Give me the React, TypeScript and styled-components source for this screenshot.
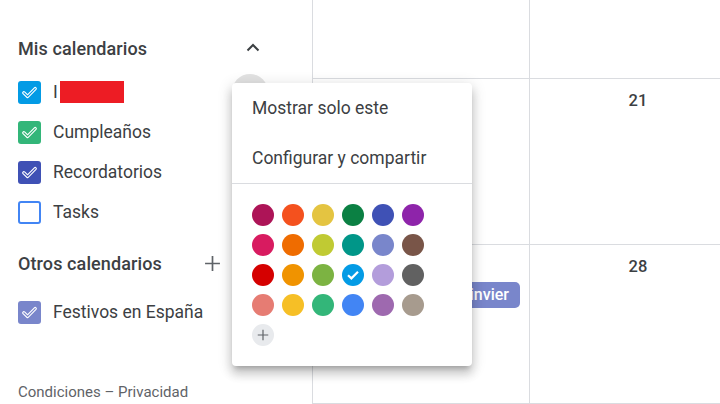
import React from "react"
import styled, { createGlobalStyle } from "styled-components"

const GlobalStyle = createGlobalStyle`
  html, body {
    margin: 0;
    padding: 0;
    background: #fff;
    font-family: Roboto, "Liberation Sans", Arial, sans-serif;
    color: #3c4043;
  }
  #root {
    width: 720px;
    height: 404px;
    overflow: hidden;
  }
`

const Screen = styled.div`
  position: relative;
  display: flex;
  width: 720px;
  height: 404px;
  overflow: hidden;
`

const Sidebar = styled.aside`
  width: 313px;
  flex-shrink: 0;
  border-right: 1px solid #dadce0;
  padding: 28px 41px 0 18px;
  box-sizing: border-box;
  display: flex;
  flex-direction: column;
`

const SectionHeader = styled.div<{ $top: number }>`
  display: flex;
  align-items: center;
  height: 40px;
  margin-top: ${(p) => p.$top}px;
  gap: 5px;
`

const SectionTitle = styled.h2`
  flex: 1;
  margin: 0;
  font-size: 18px;
  font-weight: 500;
  color: #3c4043;
  letter-spacing: 0.1px;
`

const IconSlot = styled.span`
  width: 36px;
  height: 36px;
  display: flex;
  align-items: center;
  justify-content: center;
  color: #3c4043;
`

const List = styled.ul<{ $top: number }>`
  list-style: none;
  margin: ${(p) => p.$top}px 0 0 0;
  padding: 0;
`

const Item = styled.li`
  display: flex;
  align-items: center;
  height: 40px;
`

const Label = styled.span`
  flex: 1;
  display: flex;
  align-items: center;
  margin-left: 12px;
  font-size: 17.5px;
  color: #3c4043;
  white-space: nowrap;
`

const Redacted = styled.span`
  display: inline-block;
  width: 64px;
  height: 22px;
  margin-left: 2px;
  background: #ed1c24;
`

const OptionsHover = styled.span`
  width: 36px;
  height: 36px;
  border-radius: 50%;
  background: #e2e2e2;
  margin-right: 3px;
`

const Box = styled.span<{ $color: string; $checked: boolean }>`
  width: 23px;
  height: 23px;
  box-sizing: border-box;
  border-radius: 3px;
  flex-shrink: 0;
  display: flex;
  align-items: center;
  justify-content: center;
  background: ${(p) => (p.$checked ? p.$color : "#fff")};
  border: ${(p) => (p.$checked ? "none" : `2.5px solid ${p.$color}`)};
`

const Footer = styled.div`
  margin-top: auto;
  margin-bottom: 1px;
  height: 20px;
  font-size: 15px;
  color: #5f6368;
  white-space: nowrap;
`

const Main = styled.main`
  flex: 1;
  display: grid;
  grid-template-columns: 217px 217px;
  grid-template-rows: 79px 166px 1fr;
`

const Cell = styled.div`
  border-right: 1px solid #dadce0;
  border-bottom: 1px solid #dadce0;
  padding-top: 10px;
  display: flex;
  flex-direction: column;
  align-items: stretch;
  min-width: 0;
`

const DayNum = styled.div`
  height: 24px;
  line-height: 24px;
  text-align: center;
  font-size: 16.5px;
  font-weight: 500;
  color: #3c4043;
`

const Chip = styled.div<{ $color: string }>`
  margin: 3px 9px 0 8px;
  height: 26px;
  border-radius: 5px;
  background: ${(p) => p.$color};
  color: #fff;
  font-size: 16px;
  font-weight: 500;
  line-height: 26px;
  padding: 0 11px 0 6px;
  white-space: nowrap;
  overflow: hidden;
  text-align: right;
`

const Menu = styled.div`
  position: absolute;
  left: 232px;
  top: 83px;
  width: 240px;
  height: 283px;
  box-sizing: border-box;
  background: #fff;
  border-radius: 4px;
  box-shadow: 0 8px 10px 1px rgba(0, 0, 0, 0.14), 0 3px 14px 2px rgba(0, 0, 0, 0.12),
    0 5px 5px -3px rgba(0, 0, 0, 0.2);
  z-index: 10;
  display: flex;
  flex-direction: column;
`

const MenuItem = styled.div`
  height: 50px;
  display: flex;
  align-items: center;
  padding-left: 20px;
  font-size: 17.5px;
  color: #3c4043;
`

const Divider = styled.div`
  height: 1px;
  background: #dadce0;
`

const Palette = styled.div`
  display: grid;
  grid-template-columns: repeat(6, 22px);
  grid-auto-rows: 22px;
  gap: 8px;
  padding: 20px 20px 0 20px;
`

const Swatch = styled.span<{ $color: string }>`
  width: 22px;
  height: 22px;
  border-radius: 50%;
  background: ${(p) => p.$color};
  display: flex;
  align-items: center;
  justify-content: center;
`

const AddSwatch = styled(Swatch)`
  color: #5f6368;
`

const CheckMark = ({ color }: { color: string }) => (
  <svg width="23" height="23" viewBox="0 0 23 23">
    <path d="M5.8 11.8 L9.6 15.4 L17.2 7.6" fill="none" stroke="#fff" strokeWidth="3.4" strokeLinecap="round" strokeLinejoin="round" />
    <path d="M5.8 11.8 L9.6 15.4 L17.2 7.6" fill="none" stroke={color} strokeWidth="1.2" strokeLinecap="round" strokeLinejoin="round" />
  </svg>
)

const Checkbox = ({ color, checked = true }: { color: string; checked?: boolean }) => (
  <Box $color={color} $checked={checked}>
    {checked && <CheckMark color={color} />}
  </Box>
)

const Chevron = () => (
  <svg width="16" height="16" viewBox="0 0 16 16">
    <path d="M2.5 10.5 L8 5 L13.5 10.5" fill="none" stroke="#3c4043" strokeWidth="2" />
  </svg>
)

const Plus = ({ size, color }: { size: number; color: string }) => (
  <svg width={size} height={size} viewBox="0 0 16 16">
    <path d="M8 1 V15 M1 8 H15" fill="none" stroke={color} strokeWidth="1.6" />
  </svg>
)

const palette = [
  "#ad1457", "#f4511e", "#e4c441", "#0b8043", "#3f51b5", "#8e24aa",
  "#d81b60", "#ef6c00", "#c0ca33", "#009688", "#7986cb", "#795548",
  "#d50000", "#f09300", "#7cb342", "#039be5", "#b39ddb", "#616161",
  "#e67c73", "#f6bf26", "#33b679", "#4285f4", "#9e69af", "#a79b8e",
]

const selected = "#039be5"

export default function App() {
  return (
    <>
      <GlobalStyle />
      <Screen>
        <Sidebar>
          <SectionHeader $top={0}>
            <SectionTitle>Mis calendarios</SectionTitle>
            <IconSlot>
              <Chevron />
            </IconSlot>
          </SectionHeader>
          <List $top={4}>
            <Item>
              <Checkbox color="#039be5" />
              <Label>
                I<Redacted />
              </Label>
              <OptionsHover />
            </Item>
            <Item>
              <Checkbox color="#33b679" />
              <Label>Cumpleaños</Label>
            </Item>
            <Item>
              <Checkbox color="#3f51b5" />
              <Label>Recordatorios</Label>
            </Item>
            <Item>
              <Checkbox color="#4285f4" checked={false} />
              <Label>Tasks</Label>
            </Item>
          </List>
          <SectionHeader $top={11}>
            <SectionTitle>Otros calendarios</SectionTitle>
            <IconSlot>
              <Plus size={17} color="#5f6368" />
            </IconSlot>
            <IconSlot />
          </SectionHeader>
          <List $top={9}>
            <Item>
              <Checkbox color="#7986cb" />
              <Label>Festivos en España</Label>
            </Item>
          </List>
          <Footer>Condiciones – Privacidad</Footer>
        </Sidebar>

        <Main>
          <Cell />
          <Cell />
          <Cell>
            <DayNum>20</DayNum>
          </Cell>
          <Cell>
            <DayNum>21</DayNum>
          </Cell>
          <Cell>
            <DayNum>27</DayNum>
            <Chip $color="#7986cb">Comienza el invier</Chip>
          </Cell>
          <Cell>
            <DayNum>28</DayNum>
          </Cell>
        </Main>

        <Menu>
          <MenuItem>Mostrar solo este</MenuItem>
          <MenuItem>Configurar y compartir</MenuItem>
          <Divider />
          <Palette>
            {palette.map((c) => (
              <Swatch key={c} $color={c}>
                {c === selected && (
                  <svg width="14" height="14" viewBox="0 0 14 14">
                    <path d="M2 7.2 L5.4 10.4 L12 3.8" fill="none" stroke="#fff" strokeWidth="2.2" />
                  </svg>
                )}
              </Swatch>
            ))}
            <AddSwatch $color="#e8eaed">
              <Plus size={12} color="#5f6368" />
            </AddSwatch>
          </Palette>
        </Menu>
      </Screen>
    </>
  )
}
